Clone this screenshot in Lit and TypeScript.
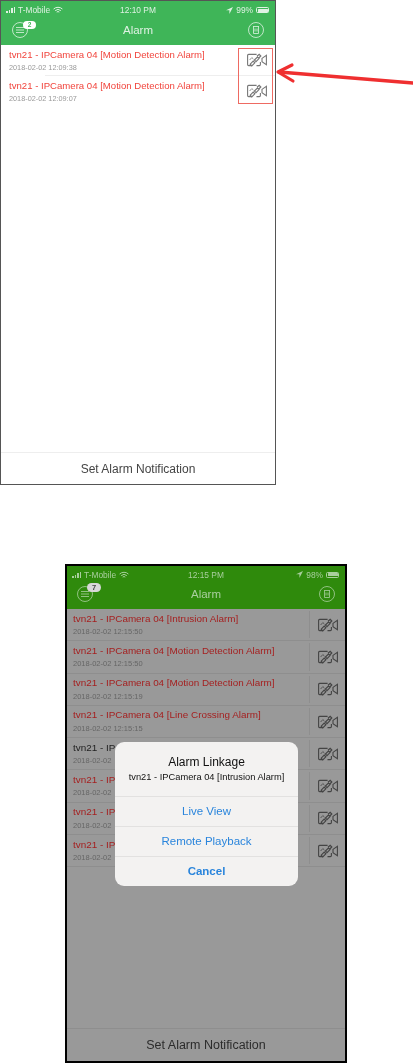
import { LitElement, html, css, svg } from "lit";
import { customElement, property } from "lit/decorators.js";

const camIcon = svg`<svg class="cam" viewBox="0 0 20 14" fill="none" stroke="currentColor" stroke-width="1.1">
  <path d="M5 12.6H1.6a1 1 0 0 1-1-1V2.4a1 1 0 0 1 1-1h8M9.5 12.6h2.9a1 1 0 0 0 1-1V9"/>
  <path d="M15 5.4l4.4-3v9.2L15 8.6z"/>
  <path d="M4.8 12.8l-1.6-1.6 3-3 1.6 1.6zM9 8.6L7.4 7l3-3 1.6 1.6zM10 3.3l2.2-2 1.6 1.6-2 2.1" stroke-width="1.2"/>
  <path d="M2.6 7l2.2-2.4 1.6 1.4" stroke-width=".8"/>
</svg>`;

interface Row { title: string; time: string; read?: boolean }

@customElement("phone-screen")
class PhoneScreen extends LitElement {
  @property() carrier = "";
  @property() clock = "";
  @property() battery = "";
  @property() badge = "";
  @property({ attribute: false }) rows: Row[] = [];

  static styles = css`
    :host { display: flex; flex-direction: column; box-sizing: border-box; font-family: "Liberation Sans", Arial, sans-serif; background: var(--bg); border: var(--frame); overflow: hidden; position: relative; }
    .head { background: var(--green); color: var(--head-ink); height: var(--head-h); flex: none; display: flex; flex-direction: column; filter: blur(.3px); }
    .status { height: var(--status-h); display: grid; grid-template-columns: 1fr auto 1fr; align-items: center; padding: 0 5px; font-size: 8.4px; flex: none; }
    .left, .right { display: flex; align-items: center; gap: 3px; }
    .right { justify-content: flex-end; }
    .bars { display: flex; align-items: flex-end; gap: 1px; height: 6px; }
    .bars i { width: 1.5px; background: currentColor; display: block; }
    .batt { width: 13px; height: 6px; border: 0.5px solid currentColor; padding: 0.5px; border-radius: 1.5px; box-sizing: border-box; display: flex; margin-right: 1px; }
    .batt i { background: currentColor; flex: 1; border-radius: .5px; }
    .nav { flex: 1; display: grid; grid-template-columns: 1fr auto 1fr; align-items: center; padding: 0 var(--nav-pad) 5px; }
    .nav h1 { margin: 0; font-size: var(--nav-size); font-weight: 400; }
    .menu { position: relative; width: 16px; height: 16px; }
    .badge { position: absolute; left: var(--badge-x); top: var(--badge-y); height: var(--badge-h); min-width: var(--badge-w); border-radius: 5px; background: var(--badge-bg); color: var(--badge-ink); font-size: var(--badge-size); font-weight: 700; text-align: center; line-height: var(--badge-h); }
    .ring { width: 16px; height: 16px; display: block; }
    .trash { justify-self: end; }
    .list { flex: 1; display: flex; flex-direction: column; filter: blur(.3px); }
    .row { height: var(--row-h); display: flex; flex: none; }
    .sep { height: 1px; flex: none; margin-left: var(--sep-inset); background: var(--sep); }
    .sep:last-child { background: var(--last-sep); }
    .txt { flex: 1; padding: 2.5px 0 0 var(--row-pad); min-width: 0; }
    .title { font-size: var(--title-size); line-height: 13px; color: var(--red); white-space: nowrap; }
    .title.read { color: #222; }
    .time { font-size: var(--time-size); line-height: 9px; margin-top: var(--time-gap); color: var(--time); white-space: nowrap; }
    .act { width: var(--act-w); display: flex; align-items: center; justify-content: center; color: var(--icon); flex: none; box-sizing: border-box; }
    .act.div { border-left: 1px solid var(--sep); margin: 2px 0 2px; }
    .cam { width: 20px; height: 14px; display: block; }
    .foot { height: var(--foot-h); box-sizing: border-box; flex: none; border-top: 1px solid var(--sep); display: flex; align-items: center; justify-content: center; color: var(--foot); font-size: var(--foot-size); filter: blur(.3px); }
  `;

  render() {
    return html`
      <div class="head">
        <div class="status">
          <div class="left">
            <span class="bars"><i style="height:2px"></i><i style="height:3px"></i><i style="height:5px"></i><i style="height:6px"></i></span>
            <span>${this.carrier}</span>
            <svg width="10" height="8" viewBox="0 0 10 8" fill="none" stroke="currentColor" stroke-width="1"><path d="M.6 3a6.5 6.5 0 0 1 8.8 0M2.2 4.6a4.2 4.2 0 0 1 5.6 0M3.7 6.1a2 2 0 0 1 2.6 0"/></svg>
          </div>
          <span>${this.clock}</span>
          <div class="right">
            <svg width="7" height="7" viewBox="0 0 7 7" fill="currentColor"><path d="M7 0L0 3.2h3.4V7z"/></svg>
            <span>${this.battery}</span>
            <span class="batt"><i></i></span>
          </div>
        </div>
        <div class="nav">
          <div class="menu">
            <svg class="ring" viewBox="0 0 16 16" fill="none" stroke="currentColor" stroke-width=".8"><circle cx="8" cy="8" r="7.5"/><path d="M4 5.5h8M4 8h8M4 10.5h8"/></svg>
            <span class="badge">${this.badge}</span>
          </div>
          <h1>Alarm</h1>
          <svg class="ring trash" viewBox="0 0 16 16" fill="none" stroke="currentColor" stroke-width=".8"><circle cx="8" cy="8" r="7.5"/><path d="M5 4.5h6M5.5 4.5v7h5v-7M7 6.5v3M9 6.5v3"/></svg>
        </div>
      </div>
      <div class="list">
        ${this.rows.map((r) => html`
          <div class="row">
            <div class="txt">
              <div class="title ${r.read ? "read" : ""}">${r.title}</div>
              <div class="time">${r.time}</div>
            </div>
            <div class="act ${this.hasAttribute("dim") ? "div" : ""}">${camIcon}</div>
          </div>
          <div class="sep"></div>`)}
      </div>
      <div class="foot">Set Alarm Notification</div>
      <slot></slot>
    `;
  }
}

@customElement("app-root")
class AppRoot extends LitElement {
  static styles = css`
    :host { display: block; width: 413px; height: 1063px; overflow: hidden; position: relative; background: #fff; }
    .stack { display: flex; flex-direction: column; align-items: flex-start; }
    .top {
      width: 276px; height: 485px; margin-left: 0;
      --bg: #fff; --green: #3fb558; --head-ink: #dff2e3; --frame: 1px solid #555; --head-h: 44px; --status-h: 18px; --nav-pad: 11px; --nav-size: 11.5px;
      --badge-bg: #fff; --badge-ink: #3fb558; --badge-x: 11px; --badge-y: -1px; --badge-w: 13px; --badge-h: 8px; --badge-size: 6.5px;
      --row-h: 30px; --row-pad: 8px; --title-size: 9.6px; --time-size: 7.3px; --time-gap: 2px; --time: #999; --red: #f1443c; --sep: #eee; --last-sep: transparent; --sep-inset: 44px; --icon: #777; --act-w: 37px; --foot-h: 32px; --foot: #444; --foot-size: 12px;
    }
    .bottom {
      width: 282px; height: 499px; margin: 79px 0 0 65px;
      --bg: #999; --green: #2f8a0c; --head-ink: #a9cf9e; --frame: 2px solid #000; --head-h: 43px; --status-h: 17px; --nav-pad: 10px; --nav-size: 11.5px;
      --badge-bg: #d8d8d8; --badge-ink: #444; --badge-x: 10px; --badge-y: -3px; --badge-w: 14px; --badge-h: 9px; --badge-size: 7.5px;
      --row-h: 31.3px; --row-pad: 6px; --title-size: 9.9px; --time-size: 7.5px; --time-gap: 2.5px; --time: #666; --red: #a51f1f; --sep: #8e8e8e; --last-sep: #8e8e8e; --sep-inset: 0px; --icon: #444; --act-w: 36px; --foot-h: 33px; --foot: #2c2c2c; --foot-size: 12.5px;
    }
    .note-box { position: absolute; left: 238px; top: 48px; width: 35px; height: 56px; box-sizing: border-box; border: 1px solid #ee6a62; }
    .arrow { position: absolute; left: 274px; top: 60px; width: 139px; height: 30px; }
    .dialog { position: absolute; left: 48px; top: 176px; width: 183px; height: 144px; box-sizing: border-box; background: #f3f2f1; border-radius: 9px; display: flex; flex-direction: column; text-align: center; color: #2a85dc; font-size: 11.5px; filter: blur(.3px); }
    .info { height: 54px; box-sizing: border-box; padding-top: 13px; color: #111; flex: none; }
    .info b { display: block; font-weight: 400; font-size: 12px; line-height: 14px; }
    .info span { display: block; font-size: 9.3px; line-height: 12px; margin-top: 2px; white-space: nowrap; }
    .btn { height: 30px; flex: none; border-top: 1px solid #e2e1e0; box-sizing: border-box; display: flex; align-items: center; justify-content: center; padding-bottom: 2px; }
    .btn.strong { font-weight: 700; }
  `;

  render() {
    const m = "tvn21 - IPCamera 04 [Motion Detection Alarm]";
    const top: Row[] = [
      { title: m, time: "2018-02-02 12:09:38" },
      { title: m, time: "2018-02-02 12:09:07" },
    ];
    const bottom: Row[] = [
      { title: "tvn21 - IPCamera 04 [Intrusion Alarm]", time: "2018-02-02 12:15:50" },
      { title: m, time: "2018-02-02 12:15:50" },
      { title: m, time: "2018-02-02 12:15:19" },
      { title: "tvn21 - IPCamera 04 [Line Crossing Alarm]", time: "2018-02-02 12:15:15" },
      { title: "tvn21 - IP", time: "2018-02-02", read: true },
      { title: "tvn21 - IP", time: "2018-02-02" },
      { title: "tvn21 - IP", time: "2018-02-02" },
      { title: "tvn21 - IP", time: "2018-02-02" },
    ];
    return html`
      <div class="stack">
        <phone-screen class="top" carrier="T-Mobile" clock="12:10 PM" battery="99%" badge="2" .rows=${top}></phone-screen>
        <phone-screen class="bottom" dim carrier="T-Mobile" clock="12:15 PM" battery="98%" badge="7" .rows=${bottom}>
          <div class="dialog">
            <div class="info"><b>Alarm Linkage</b><span>tvn21 - IPCamera 04 [Intrusion Alarm]</span></div>
            <div class="btn">Live View</div>
            <div class="btn">Remote Playback</div>
            <div class="btn strong">Cancel</div>
          </div>
        </phone-screen>
      </div>
      <div class="note-box"></div>
      <svg class="arrow" viewBox="0 0 139 30" fill="none" stroke="#ef2f30" stroke-linecap="round" stroke-linejoin="round">
        <path d="M5 12L139 23" stroke-width="3.6"/>
        <path d="M18 5L4 12l15 9" stroke-width="3.2"/>
      </svg>
    `;
  }
}
